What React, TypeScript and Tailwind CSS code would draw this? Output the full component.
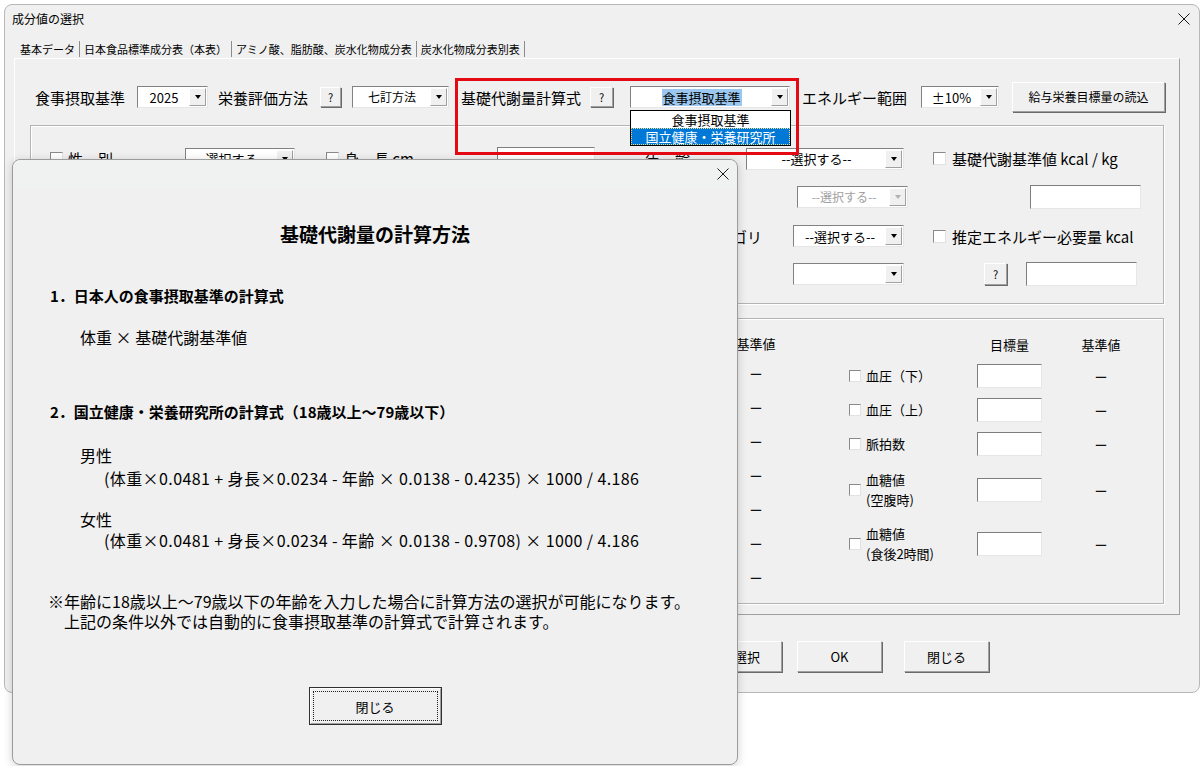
import React from "react";

type ComboProps = {
  cls: string;
  text?: string;
  disabled?: boolean;
  highlight?: boolean;
  textCls?: string;
};

function Arrow({ disabled }: { disabled?: boolean }) {
  return (
    <div className="flex h-full w-[17px] shrink-0 items-center justify-center border border-t-white border-l-white border-b-[#a0a0a0] border-r-[#a0a0a0] bg-[#f0f0f0]">
      <div
        className={`h-0 w-0 border-x-[3.5px] border-t-[4px] border-x-transparent ${
          disabled ? "border-t-[#b0b0b0]" : "border-t-black"
        }`}
      />
    </div>
  );
}

function Combo({ cls, text = "", disabled, highlight, textCls = "text-[12px]" }: ComboProps) {
  return (
    <div
      className={`flex h-[22px] shrink-0 border border-t-[#828282] border-l-[#828282] border-b-[#e6e6e6] border-r-[#e6e6e6] bg-white p-px ${cls}`}
    >
      <div
        className={`flex flex-1 items-center justify-center whitespace-nowrap leading-none ${textCls} ${
          disabled ? "text-[#a0a0a0]" : "text-black"
        }`}
      >
        {highlight ? <span className="bg-[#9cc8f0] px-[1px] py-[2px]">{text}</span> : text}
      </div>
      <Arrow disabled={disabled} />
    </div>
  );
}

function Btn({
  cls,
  children,
  textCls = "text-[13px]",
}: {
  cls: string;
  children: React.ReactNode;
  textCls?: string;
}) {
  return (
    <div
      className={`flex shrink-0 items-center justify-center whitespace-nowrap border border-t-white border-l-white border-b-[#a0a0a0] border-r-[#a0a0a0] bg-[#f0f0f0] leading-none text-black shadow-[1px_1px_0_#6a6a6a] ${textCls} ${cls}`}
    >
      {children}
    </div>
  );
}

function Input({ cls }: { cls: string }) {
  return (
    <div
      className={`shrink-0 border border-t-[#7e7e7e] border-l-[#7e7e7e] border-b-[#e6e6e6] border-r-[#e6e6e6] bg-white ${cls}`}
    />
  );
}

function Check({ small }: { small?: boolean }) {
  return (
    <span
      className={`inline-block shrink-0 border border-t-[#8a8a8a] border-l-[#8a8a8a] border-b-[#e2e2e2] border-r-[#e2e2e2] bg-white ${
        small ? "h-[12px] w-[12px]" : "h-[13px] w-[13px]"
      }`}
    />
  );
}

function CloseX({ size = 12 }: { size?: number }) {
  return (
    <svg width={size} height={size} viewBox="0 0 12 12" className="shrink-0">
      <path d="M0.5 0.5 L11.5 11.5 M11.5 0.5 L0.5 11.5" stroke="#1a1a1a" strokeWidth="1" fill="none" />
    </svg>
  );
}

function Dash() {
  return <span className="text-[13px] leading-none text-[#111]">ー</span>;
}

function Tab({ label }: { label: string }) {
  return (
    <div className="flex h-[18px] items-center">
      <span className="px-[4px] text-[11px] leading-none text-black">{label}</span>
      <span className="h-[16px] w-px bg-[#8c8c8c]" />
    </div>
  );
}

function RightRow({
  h,
  mt,
  label,
}: {
  h: string;
  mt: string;
  label: React.ReactNode;
}) {
  return (
    <div className={`flex items-center ${h} ${mt}`}>
      <div className="flex w-[128px] items-center">
        <Check small />
        <div className="ml-[5px] text-[13px] leading-[20px] text-black">{label}</div>
      </div>
      <Input cls="h-[24px] w-[65px]" />
      <div className="flex w-[118px] justify-center">
        <Dash />
      </div>
    </div>
  );
}

export default function App() {
  return (
    <div className="relative h-[766px] w-[1202px] overflow-hidden bg-white font-['Noto_Sans_CJK_JP','Noto_Sans',sans-serif] text-black">
      {/* main window */}
      <div className="ml-[4px] mt-[4px] flex h-[689px] w-[1196px] flex-col rounded-[8px] border border-[#b8b8b8] bg-[#f0f0f0]">
        {/* title bar */}
        <div className="flex h-[27px] items-center justify-between pl-[7px] pr-[9px]">
          <span className="text-[12px] leading-none">成分値の選択</span>
          <CloseX />
        </div>
        {/* tabs */}
        <div className="ml-[11px] mt-[8px] flex h-[18px] items-center">
          <Tab label="基本データ" />
          <Tab label="日本食品標準成分表（本表）" />
          <Tab label="アミノ酸、脂肪酸、炭水化物成分表" />
          <Tab label="炭水化物成分表別表" />
        </div>
        {/* tab page */}
        <div className="ml-[9px] flex h-[557px] w-[1166px] flex-col border border-t-white border-l-white border-b-[#a0a0a0] border-r-[#a0a0a0]">
          {/* row 1 */}
          <div className="mt-[23px] flex h-[30px] items-center pl-[20px]">
            <span className="text-[15px] leading-none">食事摂取基準</span>
            <Combo cls="ml-[12px] w-[71px]" text="2025" textCls="text-[13px]" />
            <span className="ml-[10px] text-[15px] leading-none">栄養評価方法</span>
            <Btn cls="ml-[12px] h-[20px] w-[21px]" textCls="text-[11px]">?</Btn>
            <Combo cls="ml-[11px] w-[97px]" text="七訂方法" />
            <span className="ml-[12px] text-[15px] leading-none">基礎代謝量計算式</span>
            <Btn cls="ml-[9px] h-[20px] w-[23px]" textCls="text-[11px]">?</Btn>
            <Combo cls="ml-[17px] w-[160px]" text="食事摂取基準" highlight textCls="text-[13px]" />
            <span className="ml-[12px] text-[15px] leading-none">エネルギー範囲</span>
            <Combo cls="ml-[14px] w-[78px]" text="±10%" textCls="text-[13px]" />
            <Btn cls="ml-[13px] h-[30px] w-[153px]" textCls="text-[12px]">給与栄養目標量の読込</Btn>
          </div>

          {/* group box 1 */}
          <div className="ml-[15px] mt-[13px] flex h-[179px] w-[1134px] flex-col border border-[#b4b4b4] shadow-[inset_1px_1px_0_#ffffff,1px_1px_0_#ffffff]">
            {/* row A */}
            <div className="mt-[21px] flex h-[23px] items-center">
              <div className="ml-[19px] flex w-[135px] items-center">
                <Check />
                <span className="ml-[5px] text-[15px] leading-none">性　別</span>
              </div>
              <Combo cls="w-[110px]" text="--選択する--" textCls="text-[13px]" />
              <div className="ml-[31px] flex w-[171px] items-center">
                <Check />
                <span className="ml-[5px] text-[15px] leading-none">身　長 cm</span>
              </div>
              <Input cls="h-[23px] w-[98px]" />
              <span className="ml-[50px] w-[101px] text-[15px] leading-none">年　齢</span>
              <Combo cls="w-[158px]" text="--選択する--" textCls="text-[13px]" />
              <div className="ml-[29px] flex items-center">
                <Check />
                <span className="ml-[6px] text-[15px] leading-none">基礎代謝基準値 kcal / kg</span>
              </div>
            </div>
            {/* row B */}
            <div className="mt-[15px] flex h-[24px] items-center">
              <div className="ml-[19px] flex w-[135px] items-center">
                <Check />
                <span className="ml-[5px] text-[15px] leading-none">体　重 kg</span>
              </div>
              <Input cls="h-[23px] w-[98px]" />
              <span className="ml-[403px] w-[111px]" />
              <Combo cls="w-[111px]" text="--選択する--" disabled textCls="text-[12px]" />
              <div className="w-[122px]" />
              <Input cls="h-[24px] w-[111px]" />
            </div>
            {/* row C */}
            <div className="mt-[16px] flex h-[22px] items-center">
              <div className="ml-[19px] flex w-[300px] items-center">
                <Check />
                <span className="ml-[5px] text-[15px] leading-none">身体活動レベル</span>
              </div>
              <span className="ml-[352px] text-[15px] leading-none">カテゴリ</span>
              <Combo cls="ml-[31px] w-[111px]" text="--選択する--" textCls="text-[13px]" />
              <div className="ml-[29px] flex items-center">
                <Check />
                <span className="ml-[6px] text-[15px] leading-none">推定エネルギー必要量 kcal</span>
              </div>
            </div>
            {/* row D */}
            <div className="mt-[15px] flex h-[24px] items-center">
              <Combo cls="ml-[762px] w-[111px]" text="" />
              <Btn cls="ml-[80px] h-[22px] w-[23px]" textCls="text-[11px]">?</Btn>
              <Input cls="ml-[19px] h-[24px] w-[111px]" />
            </div>
          </div>

          {/* group box 2 */}
          <div className="ml-[15px] mt-[14px] flex h-[286px] w-[1134px] border border-[#b4b4b4] shadow-[inset_1px_1px_0_#ffffff,1px_1px_0_#ffffff]">
            <div className="ml-[695px] flex w-[60px] flex-col items-center">
              <span className="mt-[17px] h-[16px] text-[13px] leading-[16px]">基準値</span>
              <div className="mt-[4px] flex flex-col">
                {[0, 1, 2, 3, 4, 5, 6].map((i) => (
                  <div key={i} className="flex h-[34px] items-center justify-center">
                    <Dash />
                  </div>
                ))}
              </div>
            </div>
            <div className="ml-[63px] flex flex-col">
              <div className="mt-[17px] flex h-[16px] items-center">
                <div className="w-[128px]" />
                <div className="flex w-[65px] justify-center text-[13px] leading-none">目標量</div>
                <div className="flex w-[118px] justify-center text-[13px] leading-none">基準値</div>
              </div>
              <RightRow h="h-[34px]" mt="mt-[7px]" label="血圧（下）" />
              <RightRow h="h-[34px]" mt="mt-0" label="血圧（上）" />
              <RightRow h="h-[34px]" mt="mt-0" label="脈拍数" />
              <RightRow
                h="h-[46px]"
                mt="mt-[6px]"
                label={
                  <>
                    血糖値
                    <br />
                    (空腹時)
                  </>
                }
              />
              <RightRow
                h="h-[46px]"
                mt="mt-[8px]"
                label={
                  <>
                    血糖値
                    <br />
                    (食後2時間)
                  </>
                }
              />
            </div>
          </div>
        </div>

        {/* bottom buttons */}
        <div className="ml-[694px] mt-[26px] flex items-center">
          <Btn cls="h-[31px] w-[83px]">再選択</Btn>
          <Btn cls="ml-[15px] h-[31px] w-[85px]">OK</Btn>
          <Btn cls="ml-[22px] h-[31px] w-[85px]">閉じる</Btn>
        </div>
      </div>

      {/* red highlight box */}
      <div className="absolute left-[455px] top-[78px] h-[77px] w-[344px] border-[3px] border-[#e50914]" />

      {/* dropdown list */}
      <div className="absolute left-[630px] top-[110px] flex w-[161px] flex-col border border-black bg-white">
        <div className="flex h-[17px] items-center justify-center text-[13px] leading-none">食事摂取基準</div>
        <div className="flex h-[17px] items-center justify-center border border-dotted border-[#f0e080] bg-[#0078d7] text-[13px] leading-none text-white">
          国立健康・栄養研究所
        </div>
      </div>

      {/* dialog */}
      <div className="absolute left-[12px] top-[159px] flex h-[606px] w-[726px] flex-col rounded-[8px] border border-[#9c9c9c] bg-[#f0f0f0] shadow-[0_2px_10px_rgba(0,0,0,0.18)]">
        <div className="flex h-[27px] items-center justify-end rounded-t-[8px] bg-[#f0f2f1] pr-[8px]">
          <CloseX />
        </div>
        <div className="mt-[34px] text-center text-[19px] font-bold leading-[26px]">基礎代謝量の計算方法</div>
        <div className="ml-[37px] mt-[39px] text-[15px] font-bold leading-[20px]">1．日本人の食事摂取基準の計算式</div>
        <div className="ml-[67px] mt-[21px] text-[16px] leading-[20px]">体重 × 基礎代謝基準値</div>
        <div className="ml-[37px] mt-[55px] text-[15px] font-bold leading-[20px]">
          2．国立健康・栄養研究所の計算式（18歳以上～79歳以下）
        </div>
        <div className="ml-[67px] mt-[23px] text-[16px] leading-[20px]">男性</div>
        <div className="ml-[91px] mt-[3px] whitespace-nowrap text-[16px] leading-[20px] tracking-[0.4px]">
          (体重×0.0481 + 身長×0.0234 - 年齢 × 0.0138 - 0.4235) × 1000 / 4.186
        </div>
        <div className="ml-[67px] mt-[21px] text-[16px] leading-[20px]">女性</div>
        <div className="ml-[91px] mt-[1px] whitespace-nowrap text-[16px] leading-[20px] tracking-[0.4px]">
          (体重×0.0481 + 身長×0.0234 - 年齢 × 0.0138 - 0.9708) × 1000 / 4.186
        </div>
        <div className="ml-[35px] mt-[41px] whitespace-nowrap text-[16px] leading-[20px]">
          <div>※年齢に18歳以上～79歳以下の年齢を入力した場合に計算方法の選択が可能になります。</div>
          <div>　上記の条件以外では自動的に食事摂取基準の計算式で計算されます。</div>
        </div>
        <div className="mt-[56px] flex justify-center">
          <div className="h-[38px] w-[133px] border border-[#303030] bg-[#f0f0f0]">
            <div className="flex h-full w-full items-center justify-center border border-t-white border-l-white border-b-[#a0a0a0] border-r-[#a0a0a0] p-[2px]">
              <div className="flex h-full w-full items-center justify-center border border-dotted border-[#202020] text-[13px] leading-none">
                閉じる
              </div>
            </div>
          </div>
        </div>
      </div>
    </div>
  );
}
